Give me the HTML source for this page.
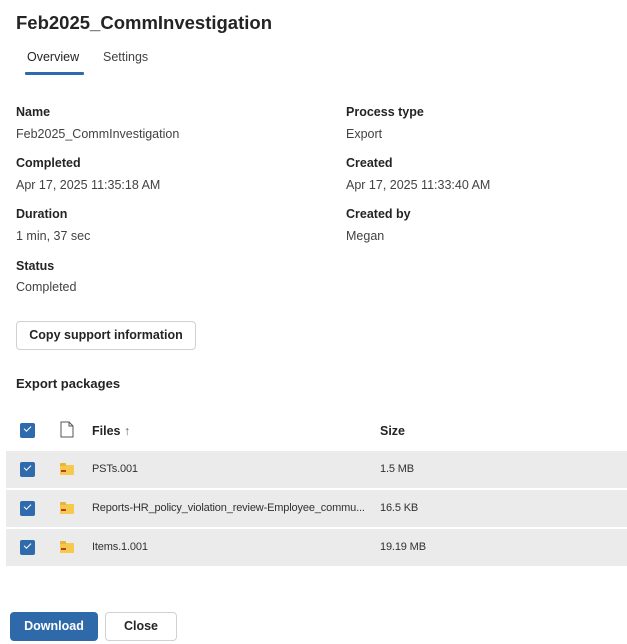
<!DOCTYPE html>
<html><head><style>
*{margin:0;padding:0;box-sizing:border-box}
body{width:627px;height:644px;background:#fff;font-family:"Liberation Sans",sans-serif;color:#323130;position:relative;overflow:hidden}
.a{position:absolute;white-space:nowrap}
.l{font-size:12.5px;font-weight:bold;color:#242424}
.v{font-size:12.5px;color:#424242}
.cb{position:absolute;left:20px;width:15px;height:15px;background:#2f6aad;border-radius:2px}
.cb:after{content:"";position:absolute;left:4px;top:3px;width:6px;height:3px;border-left:1.5px solid #fff;border-bottom:1.5px solid #fff;transform:rotate(-45deg)}
.row{position:absolute;left:6px;width:621px;height:37px;background:#ebebeb}
.fold{position:absolute;left:60px;width:14px;height:10px;background:#f5c94c;border-radius:1px}
.fold:before{content:"";position:absolute;left:0;top:-2px;width:6px;height:3px;background:#e8b53a;border-radius:1px 1px 0 0}
.fold:after{content:"";position:absolute;left:1px;top:5px;width:5px;height:2px;background:#c0392b}
.t{font-size:11px;color:#323130;letter-spacing:-0.15px}
</style></head><body>
<div class="a" style="left:16px;top:12px;font-size:18.5px;font-weight:bold;color:#242424">Feb2025_CommInvestigation</div>
<div class="a" style="left:27px;top:50px;font-size:12.5px;color:#242424">Overview</div>
<div class="a" style="left:25px;top:72px;width:59px;height:3px;background:#2f6aad;border-radius:1px"></div>
<div class="a" style="left:103px;top:50px;font-size:12.5px;color:#424242">Settings</div>

<div class="a l" style="left:16px;top:105px">Name</div>
<div class="a v" style="left:16px;top:127px">Feb2025_CommInvestigation</div>
<div class="a l" style="left:16px;top:156px">Completed</div>
<div class="a v" style="left:16px;top:178px">Apr 17, 2025 11:35:18 AM</div>
<div class="a l" style="left:16px;top:207px">Duration</div>
<div class="a v" style="left:16px;top:229px">1 min, 37 sec</div>
<div class="a l" style="left:16px;top:259px">Status</div>
<div class="a v" style="left:16px;top:280px">Completed</div>

<div class="a l" style="left:346px;top:105px">Process type</div>
<div class="a v" style="left:346px;top:127px">Export</div>
<div class="a l" style="left:346px;top:156px">Created</div>
<div class="a v" style="left:346px;top:178px">Apr 17, 2025 11:33:40 AM</div>
<div class="a l" style="left:346px;top:207px">Created by</div>
<div class="a v" style="left:346px;top:229px">Megan</div>

<div class="a" style="left:16px;top:321px;width:180px;height:29px;border:1px solid #d1d1d1;border-radius:4px;font-size:12.5px;font-weight:bold;color:#242424;text-align:center;line-height:27px">Copy support information</div>

<div class="a" style="left:16px;top:376px;font-size:13px;font-weight:bold;color:#242424">Export packages</div>

<div class="cb" style="top:423px"></div>
<svg class="a" style="left:60px;top:421px" width="14" height="17" viewBox="0 0 14 17"><path d="M1 1h8l4 4v11H1z M9 1v4h4" fill="none" stroke="#555" stroke-width="1"/></svg>
<div class="a" style="left:92px;top:424px;font-size:12.5px;font-weight:bold;color:#242424">Files <span style="font-weight:normal;color:#666">↑</span></div>
<div class="a" style="left:380px;top:424px;font-size:12.5px;font-weight:bold;color:#242424">Size</div>

<div class="row" style="top:451px"></div>
<div class="row" style="top:490px"></div>
<div class="row" style="top:529px"></div>
<div class="cb" style="top:462px"></div>
<div class="cb" style="top:501px"></div>
<div class="cb" style="top:540px"></div>
<div class="fold" style="top:465px"></div>
<div class="fold" style="top:504px"></div>
<div class="fold" style="top:543px"></div>
<div class="a t" style="left:92px;top:463px">PSTs.001</div>
<div class="a t" style="left:92px;top:502px">Reports-HR_policy_violation_review-Employee_commu...</div>
<div class="a t" style="left:92px;top:541px">Items.1.001</div>
<div class="a t" style="left:380px;top:463px">1.5 MB</div>
<div class="a t" style="left:380px;top:502px">16.5 KB</div>
<div class="a t" style="left:380px;top:541px">19.19 MB</div>

<div class="a" style="left:10px;top:612px;width:88px;height:29px;background:#2e6aa9;border-radius:4px;color:#fff;font-size:12.5px;font-weight:bold;text-align:center;line-height:29px">Download</div>
<div class="a" style="left:105px;top:612px;width:72px;height:29px;border:1px solid #d1d1d1;border-radius:4px;color:#242424;font-size:12.5px;font-weight:bold;text-align:center;line-height:27px">Close</div>
</body></html>
